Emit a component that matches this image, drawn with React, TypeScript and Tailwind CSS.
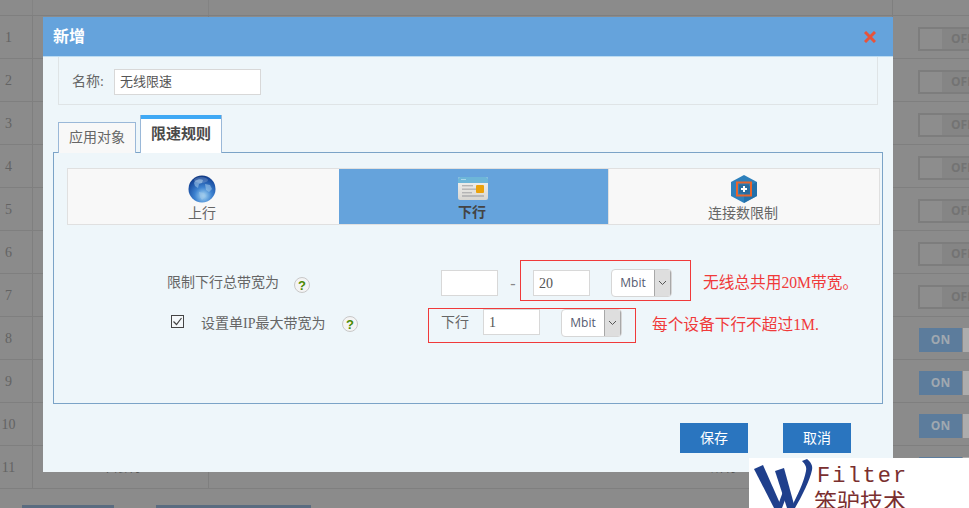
import React from "react";

const cjk = "font-['Liberation_Serif','Noto_Sans_CJK_SC',sans-serif]";

function Help() {
  return (
    <span className="flex h-4 w-4 shrink-0 items-center justify-center rounded-full border border-[#c8c8c8] bg-[#f4f4f4] font-['Liberation_Sans',sans-serif] text-[13px] font-bold leading-none text-[#4a8a00]">
      ?
    </span>
  );
}

function Select() {
  return (
    <div className="ml-[21px] flex h-[28px] w-[61px] shrink-0 overflow-hidden rounded-[4px] border border-[#d6d6d6] bg-white">
      <span className="flex flex-1 items-center justify-center font-['Open_Sans',sans-serif] text-[12px] text-[#555a70]">Mbit</span>
      <span className="flex w-[17px] items-center justify-center border-x border-[#a8a8a8] bg-[#dedede]">
        <svg width="9" height="6" viewBox="0 0 9 6" fill="none" stroke="#555" strokeWidth="1">
          <path d="M1 1l3.5 3.5L8 1" />
        </svg>
      </span>
    </div>
  );
}

function Input({ value = "", className = "" }: { value?: string; className?: string }) {
  return (
    <div className={`flex h-[26px] w-[57px] shrink-0 items-center border border-[#d8d8d8] bg-white pl-[5px] text-[14px] text-[#555] ${className}`}>
      {value}
    </div>
  );
}

function Globe() {
  return (
    <svg width="28" height="28" viewBox="0 0 28 28">
      <defs>
        <radialGradient id="g" cx="0.55" cy="0.75" r="0.8">
          <stop offset="0" stopColor="#a8d8f4" />
          <stop offset="0.4" stopColor="#3d82d0" />
          <stop offset="0.8" stopColor="#174a9e" />
          <stop offset="1" stopColor="#0e2f70" />
        </radialGradient>
      </defs>
      <circle cx="14" cy="14" r="13.5" fill="url(#g)" />
      <path d="M7 6c3-2 6-2 8-1l-1 3-3 1-1 4-3-2-1-3zM17 9l5 1 2 4-3 3-3-2zM11 17l5 1 2 3-4 4-2-3z" fill="#9cc4e8" opacity="0.6" />
      <ellipse cx="13" cy="5" rx="7" ry="3" fill="#fff" opacity="0.18" />
    </svg>
  );
}

function Card() {
  return (
    <svg width="30" height="24" viewBox="0 0 30 24">
      <defs>
        <linearGradient id="c" x1="0" y1="0" x2="0" y2="1">
          <stop offset="0" stopColor="#f4f4f2" />
          <stop offset="1" stopColor="#d8d6d0" />
        </linearGradient>
      </defs>
      <rect x="0" y="0" width="30" height="23" rx="2" fill="url(#c)" />
      <path d="M2 0h26a2 2 0 0 1 2 2v4H0V2a2 2 0 0 1 2-2z" fill="#6db6d8" />
      <rect x="3" y="2" width="5" height="1" fill="#a8d8ea" />
      <rect x="4" y="8" width="11" height="1.4" fill="#b4b4b4" />
      <rect x="4" y="11.5" width="14" height="1.4" fill="#b4b4b4" />
      <rect x="4" y="15" width="10" height="1.4" fill="#b4b4b4" />
      <rect x="4" y="18" width="22" height="2" fill="#b8b8b8" />
      <rect x="18" y="8" width="8" height="8" rx="1" fill="#eba20a" />
    </svg>
  );
}

function Hex() {
  return (
    <svg width="26" height="28" viewBox="0 0 26 28" className="ml-[2px]">
      <path d="M13 0l13 7v14l-13 7L0 21V7z" fill="#2d80bc" />
      <path d="M13 28l13-7V7L13 14z" fill="#1f6aa2" opacity="0.7" />
      <rect x="6" y="7.5" width="14" height="13" fill="none" stroke="#e8642c" strokeWidth="2" />
      <rect x="8" y="9.5" width="10" height="9" fill="#2a6a9c" />
      <path d="M13 11v6M10 14h6" stroke="#fff" strokeWidth="2" />
    </svg>
  );
}

function Row({ n }: { n: number }) {
  const on = n >= 8;
  return (
    <div className="flex h-[43px] border-b border-[#7f7f7f]">
      <div className="flex w-[33px] shrink-0 items-center border-r border-[#7f7f7f]">
        <span className="w-[17px] text-center font-['Liberation_Serif',serif] text-[14px] text-[#636363]">{n}</span>
      </div>
      <div className="flex w-[176px] shrink-0 items-center justify-center border-r border-[#7f7f7f] text-[13px] text-[#555]">
        {n === 11 ? "不限制" : ""}
      </div>
      <div className="flex w-[684px] shrink-0 items-center justify-end border-r border-[#7f7f7f] pr-[155px] text-[13px] text-[#555]">
        {n === 11 ? "所有" : ""}
      </div>
      <div className="min-w-0 flex-1 pt-[11px] pl-[25px]">
        {on ? (
          <div className="ml-px flex h-[24px] w-[80px]">
            <span className="flex w-[43px] items-center justify-center bg-[#5c7c9c] font-['Open_Sans',sans-serif] text-[12px] font-bold text-[#a0a8b0]">ON</span>
            <span className="ml-px w-[36px] bg-[#adadad]" />
          </div>
        ) : (
          <div className="flex h-[24px] w-[80px] border-2 border-[#7d7d7d] bg-[#858585]">
            <span className="w-[22px] bg-[#8d8d8d]" />
            <span className="ml-[9px] font-['Open_Sans',sans-serif] text-[12px] font-bold leading-[20px] text-[#737373]">OFF</span>
          </div>
        )}
      </div>
    </div>
  );
}

export default function App() {
  return (
    <div className={`relative h-[508px] w-[969px] overflow-hidden bg-[#8b8b8b] ${cjk}`}>
      <div className="h-[16px] border-b border-[#7f7f7f]">
        <div className="flex h-full">
          <div className="w-[33px] border-r border-[#838383]" />
          <div className="w-[176px] border-r border-[#838383]" />
          <div className="w-[684px] border-r border-[#7f7f7f]" />
        </div>
      </div>
      {Array.from({ length: 11 }, (_, i) => (
        <Row key={i} n={i + 1} />
      ))}
      <div className="mt-[16px] flex pl-[22px]">
        <div className="h-[4px] w-[92px] bg-[#5a6c80]" />
        <div className="ml-[42px] h-[4px] w-[155px] bg-[#5a6c80]" />
      </div>

      {/* Modal */}
      <div className="absolute left-[43px] top-[17px] h-[455px] w-[850px] bg-[#eef6fa]">
        <div className="flex h-[40px] items-center justify-between border-b border-[#bcdcf2] bg-[#65a3dc] pl-[10px] pr-[17px]">
          <span className="text-[16px] font-bold text-white">新增</span>
          <svg width="12" height="12" viewBox="0 0 12 12" stroke="#e8533a" strokeWidth="3">
            <path d="M1 1l10 10M11 1L1 11" />
          </svg>
        </div>
        <div className="mx-[15px] flex h-[48px] items-center border-x border-b border-[#dfe4e6] pl-[13px] pt-[2px] text-[14px] text-[#666]">
          <span>名称:</span>
          <div className="ml-[10px] flex h-[26px] w-[147px] items-center border border-[#d8d8d8] bg-white pl-[5px] text-[13px] text-[#555]">无线限速</div>
        </div>

        <div className="ml-[15px] mt-[10px] flex h-[38px] items-end gap-[4px]">
          <div className="flex h-[31px] w-[78px] items-center justify-center border border-b-0 border-[#9ab8d8] bg-[#f8f8f8] pb-[2px] text-[14px] text-[#666]">应用对象</div>
          <div className="relative z-10 flex h-[38px] w-[82px] flex-col border-x border-[#9ab8d8] bg-white">
            <div className="h-[4px] bg-[#3fa9f5]" />
            <div className="flex flex-1 items-center justify-center pb-[3px] text-[15px] font-bold text-[#4a4a4a]">限速规则</div>
          </div>
        </div>

        <div className="-mt-px ml-[10px] h-[252px] w-[830px] border border-[#7ba3c7] pl-[13px] pt-[15px]">
          <div className="flex h-[57px] w-[813px] border border-[#e0e0e0] bg-[#f8f8f8]">
            <div className="flex w-[270px] flex-col items-center pr-[2px] pt-[6px] text-[14px] leading-[17px] text-[#666]">
              <Globe />
              <span className="mt-[2px]">上行</span>
            </div>
            <div className="ml-px flex w-[269px] flex-col items-center bg-[#65a3dc] pr-[1px] pt-[8px] text-[14px] font-bold leading-[17px] text-[#444]">
              <Card />
              <span className="mt-[3px] -ml-[2px]">下行</span>
            </div>
            <div className="flex flex-1 flex-col items-center border-l border-[#e0e0e0] pr-[2px] pt-[6px] text-[14px] leading-[17px] text-[#666]">
              <Hex />
              <span className="mt-[2px]">连接数限制</span>
            </div>
          </div>

          <div className="-ml-[13px] mt-[35px] flex h-[41px] items-start">
            <span className="ml-[113px] mt-[14px] w-[127px] shrink-0 whitespace-nowrap text-[14px] leading-[17px] text-[#666]">限制下行总带宽为</span>
            <span className="mt-[17px]"><Help /></span>
            <Input className="ml-[131px] mt-[10px]" />
            <span className="mt-[12px] flex w-[22px] shrink-0 justify-center pl-[8px] text-[#888]">-</span>
            <div className="flex h-[41px] w-[171px] shrink-0 items-start border border-[#f03a3a] pl-[12px] pt-[8px]">
              <Input value="20" className="mt-px" />
              <Select />
            </div>
            <span className="ml-[12px] mt-[12px] whitespace-nowrap text-[15.7px] leading-[22px] text-[#f03a3a]">无线总共用20M带宽。</span>
          </div>

          <div className="-ml-[13px] mt-[7px] flex h-[35px] items-start">
            <span className="ml-[117px] mt-[7px] flex h-[13px] w-[13px] shrink-0 items-center justify-center border border-[#444] bg-[#f4f8fa]">
              <svg width="11" height="9" viewBox="0 0 11 9" fill="none" stroke="#444" strokeWidth="1.2">
                <path d="M1.5 4.5l3 3L9.5 1" />
              </svg>
            </span>
            <span className="ml-[17px] mt-[7px] w-[125px] shrink-0 whitespace-nowrap text-[14px] leading-[17px] text-[#666]">设置单IP最大带宽为</span>
            <span className="ml-[16px] mt-[8px]"><Help /></span>
            <div className="ml-[70px] flex h-[35px] w-[208px] shrink-0 items-start border border-[#f03a3a] pl-[12px]">
              <span className="mt-[5px] w-[28px] whitespace-nowrap text-[14px] leading-[17px] text-[#666]">下行</span>
              <Input value="1" className="ml-[14px]" />
              <Select />
            </div>
            <span className="ml-[16px] mt-[6px] whitespace-nowrap text-[15.7px] leading-[22px] text-[#f03a3a]">每个设备下行不超过1M.</span>
          </div>
        </div>

        <div className="ml-[637px] mt-[19px] flex gap-[35px]">
          <div className="flex h-[30px] w-[68px] items-center justify-center bg-[#2a75bf] text-[14px] text-white">保存</div>
          <div className="flex h-[30px] w-[68px] items-center justify-center bg-[#2a75bf] text-[14px] text-white">取消</div>
        </div>
      </div>

      {/* Watermark logo */}
      <div className="absolute left-[749px] top-[458px] flex h-[50px] w-[220px] bg-white">
        <svg width="68" height="50" viewBox="0 0 68 50" className="shrink-0">
          <path d="M5 11L14 7L33 50H25z" fill="#1f3f8c" />
          <path d="M28 50L36 28L39 34L33 50z" fill="#1f3f8c" />
          <path d="M26 13L35 10L46 50H38z" fill="#1f3f8c" />
          <path d="M53 3L58 1C62 4 64 8 63 12C61 22 53 38 46 50H42C48 38 55 24 57 13C58 9 56 6 53 3z" fill="#1f3f8c" />
        </svg>
        <div className="flex flex-col pt-[7px]">
          <span className="h-[24px] font-['Liberation_Mono',monospace] text-[22px] leading-[24px] tracking-[2px] text-[#7a2f2f]">Filter</span>
          <span className="-ml-[3px] h-[19px] font-['Noto_Sans_CJK_SC',sans-serif] text-[23px] leading-[23px] text-[#7a2f2f]">笨驴技术</span>
        </div>
      </div>
    </div>
  );
}
